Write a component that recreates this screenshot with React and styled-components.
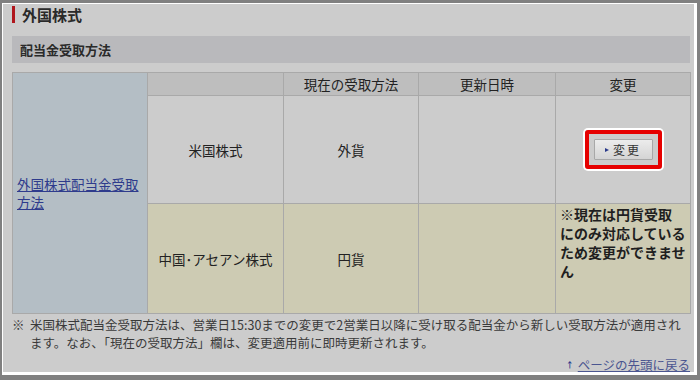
import styled, { createGlobalStyle } from "styled-components";

const GlobalStyle = createGlobalStyle`
  html, body {
    margin: 0;
    padding: 0;
    background: #cccccc;
  }
  body {
    font-family: "Noto Sans CJK JP", "Noto Sans", sans-serif;
    color: #222222;
  }
`;

const Frame = styled.div`
  width: 700px;
  height: 380px;
  box-sizing: border-box;
  border-style: solid;
  border-color: #808080;
  border-width: 3px 3px 5px 2px;
`;

const Inner = styled.div`
  height: 100%;
  box-sizing: border-box;
  border-style: solid;
  border-color: #ffffff;
  border-width: 1px 3px 3px 1px;
  background: #cccccc;
  padding: 2px 4px 0 9px;
`;

const Title = styled.h1`
  display: flex;
  align-items: center;
  height: 17px;
  margin: 0 0 13px;
  border-left: 3px solid #b0161c;
  padding-left: 7px;
  font-size: 15px;
  font-weight: bold;
  line-height: 17px;
  color: #2a2a2a;
`;

const SectionBar = styled.h2`
  display: flex;
  align-items: center;
  height: 27px;
  margin: 0 0 9px;
  padding-left: 8px;
  background: #b9b9bc;
  font-size: 13px;
  font-weight: bold;
  color: #2a2a2a;
`;

const Table = styled.table`
  width: 678px;
  border-collapse: collapse;
  table-layout: fixed;
  font-size: 13.5px;
  color: #222222;
`;

const Cell = styled.td`
  border: 1px solid #a9a9a9;
  padding: 0 4px;
  text-align: center;
  vertical-align: middle;
  background: ${(p) =>
    p.$tone === "head"
      ? "#bebebe"
      : p.$tone === "label"
      ? "#b4bec5"
      : p.$tone === "beige"
      ? "#cdcbb3"
      : "#cccccc"};
  height: ${(p) => p.$h || "auto"};
  box-sizing: border-box;
`;

const HeadCell = styled(Cell).attrs({ as: "th" })`
  font-weight: normal;
  height: 23px;
`;

const LabelCell = styled(Cell)`
  text-align: left;
  line-height: 18px;
  padding: 0 4px;
`;

const NoteCell = styled(Cell)`
  text-align: left;
  vertical-align: top;
  padding: 1px 4px;
  font-size: 14px;
  font-weight: bold;
  line-height: 19px;
  white-space: nowrap;
  color: #1f1f1f;
`;

const BlueLink = styled.a`
  color: #2e3b8c;
  text-decoration: underline;
  cursor: pointer;
`;

const Highlight = styled.div`
  display: inline-flex;
  border: 4px solid #e60000;
  border-radius: 3px;
  box-shadow: 0 0 0 2px #ffffff;
  padding: 5px;
`;

const ChangeButton = styled.button`
  display: flex;
  align-items: center;
  justify-content: center;
  gap: 4px;
  width: 59px;
  height: 21px;
  padding: 0;
  border: 1px solid #a8a8a8;
  border-radius: 1px;
  background: linear-gradient(#ececec, #d4d4d4);
  font-family: "Noto Sans CJK JP", sans-serif;
  font-size: 12px;
  letter-spacing: 2px;
  color: #333333;
  cursor: pointer;
`;

const Arrow = styled.span`
  width: 0;
  height: 0;
  border-top: 2.5px solid transparent;
  border-bottom: 2.5px solid transparent;
  border-left: 4px solid #2a3a8a;
`;

const Note = styled.p`
  margin: 2px 0 0;
  padding-left: 18px;
  text-indent: -18px;
  font-size: 12.5px;
  line-height: 18px;
  color: #3a3a3a;
`;

const BackRow = styled.div`
  display: flex;
  justify-content: flex-end;
  align-items: center;
  gap: 4px;
  margin-top: 3px;
  font-size: 12.5px;
`;

const UpArrow = styled.span`
  color: #2e3b8c;
  font-size: 8px;
  font-weight: bold;
`;

const BackLink = styled.a`
  color: #4a5590;
  text-decoration: underline;
  cursor: pointer;
`;

export default function App() {
  return (
    <>
      <GlobalStyle />
      <Frame>
        <Inner>
          <Title>外国株式</Title>
          <SectionBar>配当金受取方法</SectionBar>
          <Table>
            <colgroup>
              <col style={{ width: 135 }} />
              <col style={{ width: 136 }} />
              <col style={{ width: 135 }} />
              <col style={{ width: 137 }} />
              <col style={{ width: 135 }} />
            </colgroup>
            <tbody>
              <tr>
                <LabelCell $tone="label" rowSpan={3}>
                  <BlueLink>外国株式配当金受取方法</BlueLink>
                </LabelCell>
                <HeadCell $tone="head"></HeadCell>
                <HeadCell $tone="head">現在の受取方法</HeadCell>
                <HeadCell $tone="head">更新日時</HeadCell>
                <HeadCell $tone="head">変更</HeadCell>
              </tr>
              <tr>
                <Cell $h="108px">米国株式</Cell>
                <Cell>外貨</Cell>
                <Cell></Cell>
                <Cell>
                  <Highlight>
                    <ChangeButton>
                      <Arrow />
                      変更
                    </ChangeButton>
                  </Highlight>
                </Cell>
              </tr>
              <tr>
                <Cell $tone="beige" $h="110px">
                  中国･アセアン株式
                </Cell>
                <Cell $tone="beige">円貨</Cell>
                <Cell $tone="beige"></Cell>
                <NoteCell $tone="beige">
                  ※現在は円貨受取
                  <br />
                  にのみ対応している
                  <br />
                  ため変更ができませ
                  <br />ん
                </NoteCell>
              </tr>
            </tbody>
          </Table>
          <Note>
            ※&nbsp;&nbsp;米国株式配当金受取方法は、営業日15:30までの変更で2営業日以降に受け取る配当金から新しい受取方法が適用され
            <br />
            ます。なお、「現在の受取方法」欄は、変更適用前に即時更新されます。
          </Note>
          <BackRow>
            <UpArrow>↑</UpArrow>
            <BackLink>ページの先頭に戻る</BackLink>
          </BackRow>
        </Inner>
      </Frame>
    </>
  );
}
